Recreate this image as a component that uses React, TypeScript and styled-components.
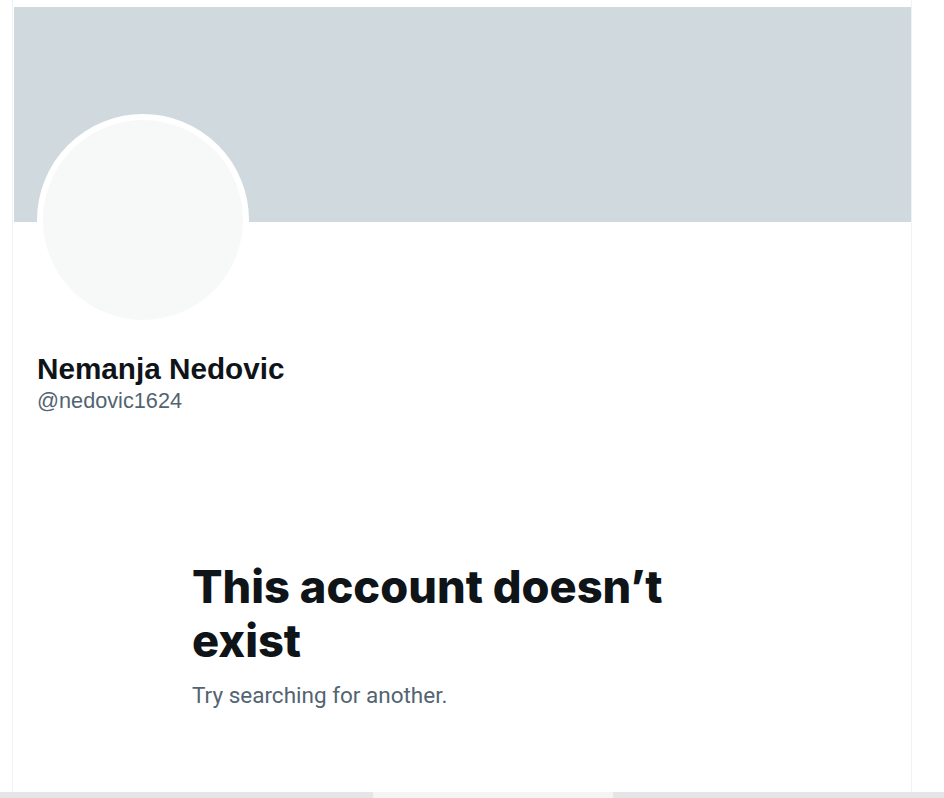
import styled, { createGlobalStyle } from 'styled-components';

const GlobalStyle = createGlobalStyle`
    html, body {
        margin: 0;
        padding: 0;
        background: #ffffff;
    }
    body {
        font-family: 'Segoe UI', Roboto, 'Liberation Sans', sans-serif;
        color: #0f1419;
    }
`;

const Page = styled.div`
    display: flex;
    flex-direction: column;
    height: 798px;
    overflow: hidden;
`;

const Main = styled.div`
    flex: 1;
    display: flex;
    padding-left: 12px;
`;

const Column = styled.div`
    box-sizing: border-box;
    width: 900px;
    padding-top: 7px;
    border-left: 1px solid #eff3f4;
    border-right: 1px solid #eff3f4;
    display: flex;
    flex-direction: column;
`;

const Banner = styled.div`
    height: 215px;
    margin-left: 1px;
    background: #cfd9de;
`;

const ProfileHeader = styled.div`
    padding: 0 24px;
`;

const Avatar = styled.div`
    box-sizing: border-box;
    width: 212px;
    height: 212px;
    margin-top: -108px;
    border-radius: 50%;
    border: 6px solid #ffffff;
    background: #f7f9f9;
`;

const Name = styled.div`
    margin-top: 25px;
    font-family: 'Liberation Sans', Arial, sans-serif;
    font-weight: 700;
    font-size: 29.7px;
    line-height: 36px;
    color: #0f1419;
`;

const Handle = styled.div`
    font-family: 'Liberation Sans', Arial, sans-serif;
    font-size: 21.7px;
    line-height: 28px;
    color: #536471;
`;

const EmptyState = styled.div`
    box-sizing: border-box;
    max-width: 600px;
    width: 100%;
    margin: 145px auto 0;
    padding: 0 30px;
`;

const Heading = styled.div`
    font-family: Inter, Roboto, sans-serif;
    font-weight: 800;
    font-size: 45.2px;
    line-height: 54px;
    color: #0f1419;
`;

const Subtitle = styled.div`
    margin-top: 12px;
    font-family: Roboto, 'Liberation Sans', sans-serif;
    font-size: 22.5px;
    line-height: 30px;
    color: #536471;
`;

const Taskbar = styled.div`
    display: flex;
    height: 6px;
    background: #e6e7e9;
`;

const TaskSegment = styled.div<{ $light?: boolean; $w: number }>`
    width: ${(p) => p.$w}px;
    background: ${(p) => (p.$light ? '#f4f4f5' : '#e4e5e7')};
`;

export default function App() {
    return (
        <Page>
            <GlobalStyle />
            <Main>
                <Column>
                    <Banner />
                    <ProfileHeader>
                        <Avatar />
                        <Name>Nemanja Nedovic</Name>
                        <Handle>@nedovic1624</Handle>
                    </ProfileHeader>
                    <EmptyState>
                        <Heading>This account doesn’t exist</Heading>
                        <Subtitle>Try searching for another.</Subtitle>
                    </EmptyState>
                </Column>
            </Main>
            <Taskbar>
                <TaskSegment $w={373} />
                <TaskSegment $w={240} $light />
                <TaskSegment $w={331} />
            </Taskbar>
        </Page>
    );
}
